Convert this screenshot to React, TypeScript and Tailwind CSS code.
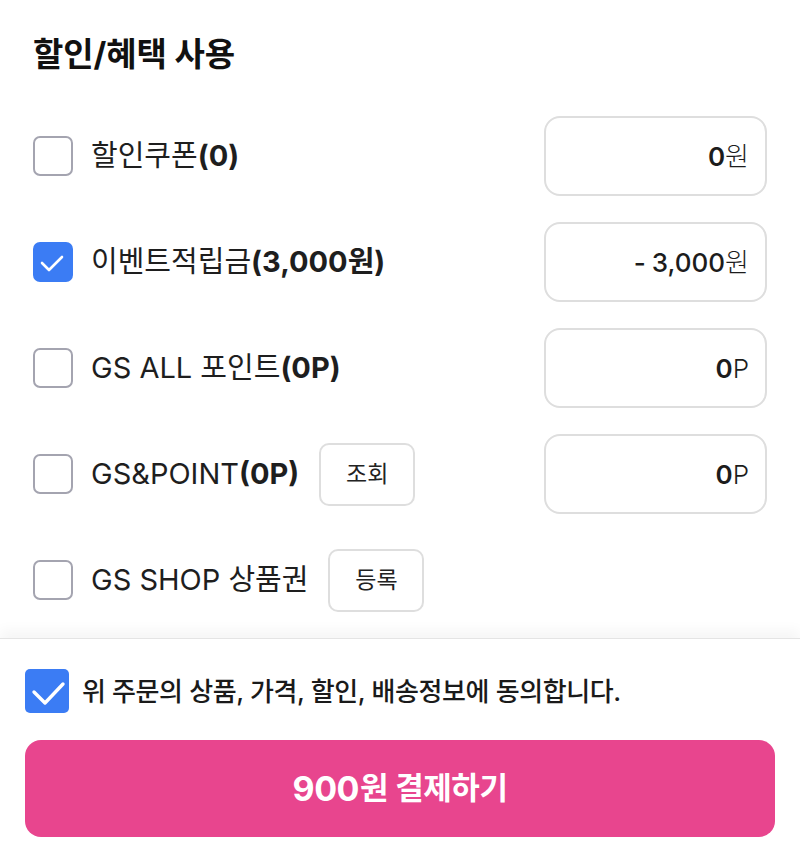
import type { ReactNode } from "react"

const FONT = { fontFamily: '"Inter", "Noto Sans CJK KR", sans-serif' }

function CheckBox({ checked }: { checked: boolean }) {
  if (checked) {
    return (
      <div className="flex h-[40px] w-[40px] shrink-0 items-center justify-center rounded-[7px] bg-[#3b7cf4]">
        <svg width="40" height="40" viewBox="0 0 40 40" fill="none">
          <path d="M9 21 L16 28 L29 15" stroke="white" strokeWidth="2.6" strokeLinecap="round" strokeLinejoin="round" />
        </svg>
      </div>
    )
  }
  return <div className="h-[40px] w-[40px] shrink-0 rounded-[7px] border-2 border-[#a4a4b0] bg-white" />
}

function ValueBox({ children }: { children: ReactNode }) {
  return (
    <div className="flex h-[80px] w-[223px] items-center justify-end rounded-[16px] border-2 border-[#dedede] pr-[16px] text-[26px] text-[#1c1c1c]">
      {children}
    </div>
  )
}

function SmallButton({ label, className }: { label: string; className?: string }) {
  return (
    <button
      type="button"
      className={`flex h-[63px] w-[96px] items-center justify-center rounded-[10px] border-2 border-[#dedede] bg-white text-[23px] text-[#222] ${className ?? ""}`}
    >
      {label}
    </button>
  )
}

interface Row {
  checked: boolean
  label: ReactNode
  action?: string
  value?: ReactNode
}

const rows: Row[] = [
  {
    checked: false,
    label: (
      <>
        할인쿠폰<b className="font-bold">(0)</b>
      </>
    ),
    value: (
      <>
        <b className="font-semibold">0</b>
        <span className="font-light">원</span>
      </>
    ),
  },
  {
    checked: true,
    label: (
      <>
        이벤트적립금<b className="font-bold">(3,000원)</b>
      </>
    ),
    value: (
      <>
        <span className="mr-[6px] font-medium">-</span>
        <span className="font-medium">3,000</span>
        <span className="font-light">원</span>
      </>
    ),
  },
  {
    checked: false,
    label: (
      <>
        GS ALL 포인트<b className="font-bold">(0P)</b>
      </>
    ),
    value: (
      <>
        <b className="font-semibold">0</b>
        <span className="font-light">P</span>
      </>
    ),
  },
  {
    checked: false,
    label: (
      <>
        GS&amp;POINT<b className="font-bold">(0P)</b>
      </>
    ),
    action: "조회",
    value: (
      <>
        <b className="font-semibold">0</b>
        <span className="font-light">P</span>
      </>
    ),
  },
  {
    checked: false,
    label: <>GS SHOP 상품권</>,
    action: "등록",
  },
]

export default function App() {
  return (
    <div className="flex h-[841px] w-[800px] flex-col bg-white" style={FONT}>
      <div className="px-[33px]">
        <h2 className="pt-[34px] text-[33px] font-bold leading-[40px] tracking-[-0.1px] text-[#111]">
          할인/혜택 사용
        </h2>

        <div className="mt-[42px] flex flex-col gap-[26px]">
          {rows.map((row, i) => (
            <div key={i} className="flex h-[80px] items-center justify-between">
              <div className="flex items-center">
                <CheckBox checked={row.checked} />
                <span className="ml-[18px] text-[29px] tracking-[0px] text-[#1e1e1e]">{row.label}</span>
                {row.action && <SmallButton label={row.action} className="ml-[20px]" />}
              </div>
              {row.value && <ValueBox>{row.value}</ValueBox>}
            </div>
          ))}
        </div>
      </div>

      <div className="mt-[18px] flex-1 border-t border-[#e4e4e4] px-[25px] pt-[30px] shadow-[0_-8px_12px_rgba(0,0,0,0.04)]">
        <div className="flex items-center">
          <div className="flex h-[44px] w-[44px] shrink-0 items-center justify-center rounded-[5px] bg-[#3b7cf4]">
            <svg width="44" height="44" viewBox="0 0 44 44" fill="none">
              <path d="M9 23 L20 34 L38 15" stroke="white" strokeWidth="3.4" strokeLinecap="round" strokeLinejoin="round" />
            </svg>
          </div>
          <span className="ml-[13px] text-[26px] font-medium tracking-[-0.4px] text-[#1a1a1a]">
            위 주문의 상품, 가격, 할인, 배송정보에 동의합니다.
          </span>
        </div>

        <button
          type="button"
          className="mt-[27px] flex h-[97px] w-full items-center justify-center rounded-[16px] bg-[#e8458e] text-white"
        >
          <span className="text-[34px] font-bold tracking-[-0.5px]">900</span>
          <span className="ml-[1px] text-[31px] font-semibold tracking-[-0.5px]">원 결제하기</span>
        </button>
      </div>
    </div>
  )
}
